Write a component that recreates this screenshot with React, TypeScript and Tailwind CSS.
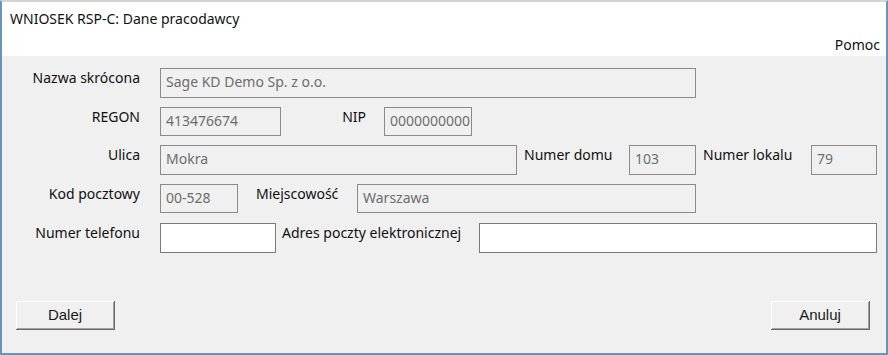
const ui = { fontFamily: '"Noto Sans", "Open Sans", sans-serif' };
const btnFont = { fontFamily: '"Liberation Sans", Arial, sans-serif' };

function Box({ value, w, white }: { value?: string; w: number; white?: boolean }) {
  return (
    <div
      className={`h-full shrink-0 border pl-[5px] pt-[3px] text-[14px] leading-[20px] whitespace-nowrap overflow-hidden ${
        white ? "bg-white border-[#7a7a7a]" : "bg-[#f0f0f0] border-[#8a8a8a] text-[#6d6d6d]"
      }`}
      style={{ width: w }}
    >
      {value}
    </div>
  );
}

function Label({ text, w, align = "left", pl = 0 }: { text: string; w: number; align?: "left" | "right"; pl?: number }) {
  return (
    <div
      className={`shrink-0 text-[14px] leading-[20px] text-[#111] whitespace-nowrap ${align === "right" ? "text-right" : "text-left"}`}
      style={{ width: w, paddingLeft: pl }}
    >
      {text}
    </div>
  );
}

function Button({ children }: { children: string }) {
  return (
    <button
      type="button"
      className="w-[99px] h-[29px] bg-[#f0f0f0] border-r border-b border-[#696969] shadow-[inset_1px_1px_0_#ffffff,inset_-1px_-1px_0_#a0a0a0] text-[15px] text-[#1a1a1a]"
      style={btnFont}
    >
      {children}
    </button>
  );
}

export default function App() {
  return (
    <div
      className="w-[888px] h-[355px] flex flex-col bg-white border-t-2 border-t-[#d4d4d4] border-x-2 border-b-2 border-x-[#6a95bb] border-b-[#6a95bb] overflow-hidden"
      style={ui}
    >
      {/* title area */}
      <div className="h-[54px] shrink-0 flex flex-col bg-white">
        <div className="pl-[8px] pt-[7px] text-[14px] leading-[20px] text-[#111]">WNIOSEK RSP-C: Dane pracodawcy</div>
        <div className="mt-auto pr-[6px] pb-[1px] text-right text-[14px] leading-[20px] text-[#111]">Pomoc</div>
      </div>

      {/* form */}
      <div className="flex-1 bg-[#f0f0f0] flex flex-col pt-[12px]">
        <div className="flex h-[30px]">
          <Label text="Nazwa skrócona" w={138} align="right" />
          <div className="w-[20px] shrink-0" />
          <Box value="Sage KD Demo Sp. z o.o." w={536} />
        </div>

        <div className="flex h-[29px] mt-[9px]">
          <Label text="REGON" w={138} align="right" />
          <div className="w-[20px] shrink-0" />
          <Box value="413476674" w={121} />
          <Label text="NIP" w={85} align="right" />
          <div className="w-[18px] shrink-0" />
          <Box value="0000000000" w={88} />
        </div>

        <div className="flex h-[30px] mt-[9px]">
          <Label text="Ulica" w={138} align="right" />
          <div className="w-[20px] shrink-0" />
          <Box value="Mokra" w={357} />
          <Label text="Numer domu" w={112} pl={7} />
          <Box value="103" w={67} />
          <Label text="Numer lokalu" w={115} pl={7} />
          <Box value="79" w={66} />
        </div>

        <div className="flex h-[29px] mt-[9px]">
          <Label text="Kod pocztowy" w={138} align="right" />
          <div className="w-[20px] shrink-0" />
          <Box value="00-528" w={78} />
          <Label text="Miejscowość" w={119} pl={18} />
          <Box value="Warszawa" w={339} />
        </div>

        <div className="flex h-[30px] mt-[10px]">
          <Label text="Numer telefonu" w={138} align="right" />
          <div className="w-[20px] shrink-0" />
          <Box w={116} white />
          <Label text="Adres poczty elektronicznej" w={203} pl={6} />
          <Box w={398} white />
        </div>

        <div className="flex justify-between mt-[48px] pl-[14px] pr-[16px]">
          <Button>Dalej</Button>
          <Button>Anuluj</Button>
        </div>
      </div>
    </div>
  );
}
